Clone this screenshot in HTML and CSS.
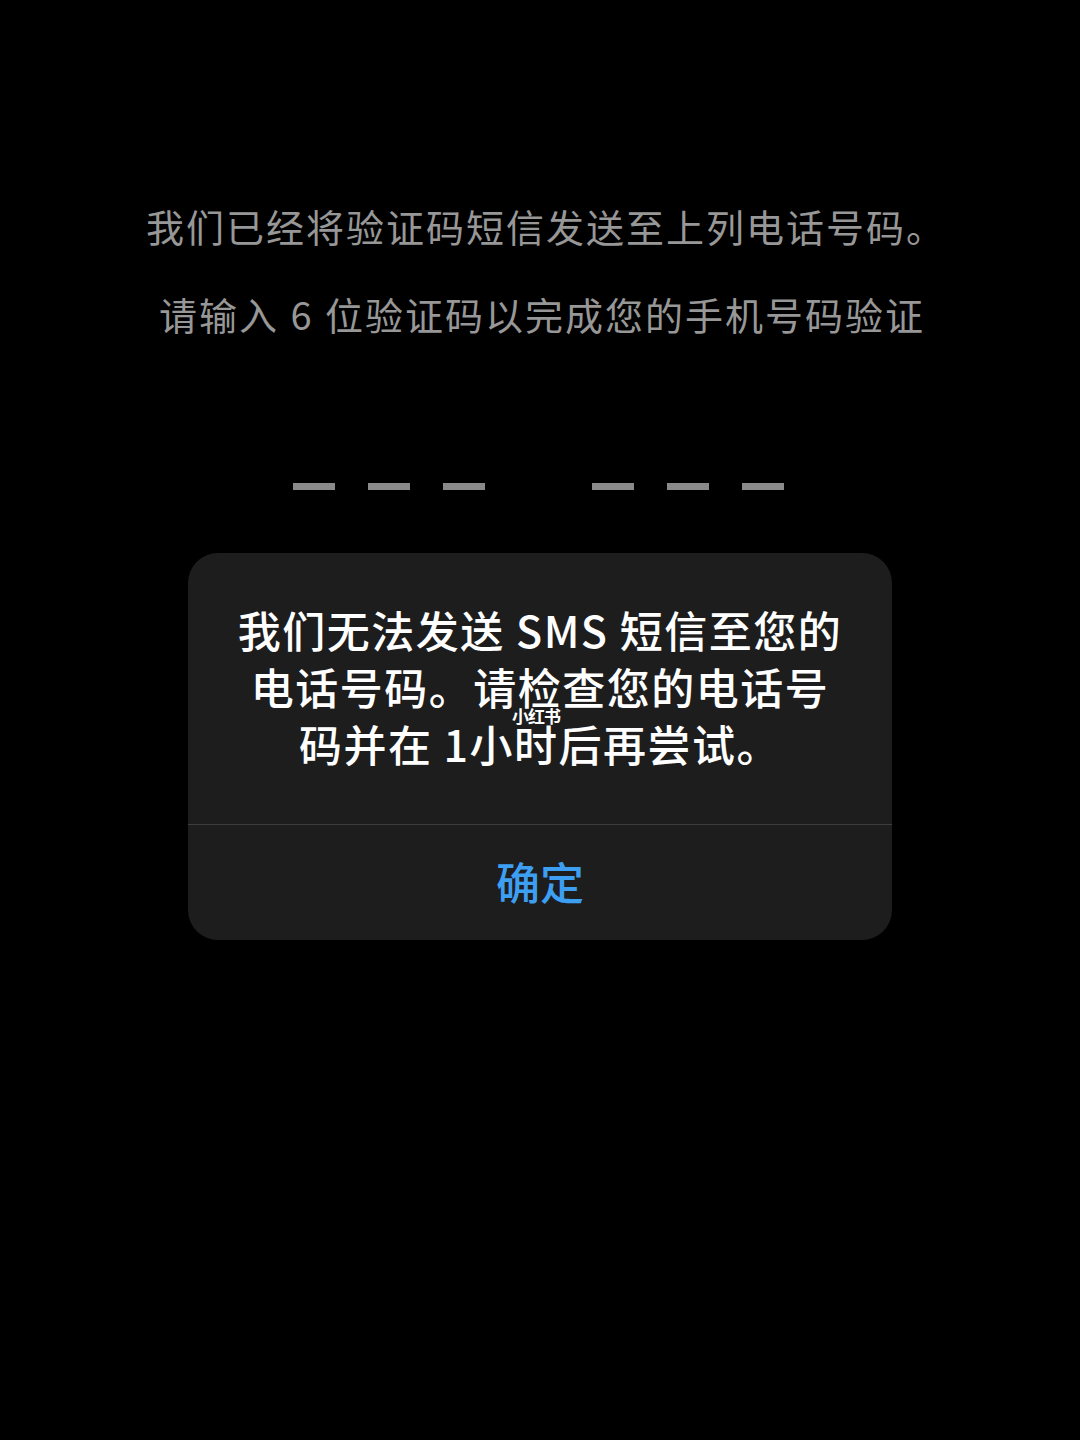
FILE: index.html
```html
<!DOCTYPE html>
<html lang="zh-CN">
<head>
<meta charset="utf-8">
<link rel="stylesheet" href="styles.css">
</head>
<body>
<main class="screen">
  <p class="hint hint-1">我们已经将验证码短信发送至上列电话号码。</p>
  <p class="hint hint-2">请输入 6 位验证码以完成您的手机号码验证</p>
  <div class="code">
    <div class="group"><span class="dash"></span><span class="dash"></span><span class="dash"></span></div>
    <div class="group"><span class="dash"></span><span class="dash"></span><span class="dash"></span></div>
  </div>
  <div class="alert">
    <div class="alert-body">
      <p class="alert-msg">我们无法发送 SMS 短信至您的<br>电话号码。请检查您的电话号<br>码并在 1小时后再尝试。</p>
      <span class="watermark">小红书</span>
    </div>
    <div class="alert-btn">确定</div>
  </div>
</main>
</body>
</html>
```
FILE: styles.css
```css
html, body {
  margin: 0;
  padding: 0;
  background: #000;
}
body {
  width: 1080px;
  height: 1440px;
  font-family: "Noto Sans CJK SC", "Noto Sans", sans-serif;
}
.screen {
  display: flex;
  flex-direction: column;
  align-items: center;
  padding-top: 199px;
}
.hint {
  margin: 0;
  color: #979797;
  font-size: 38px;
  line-height: 54px;
  letter-spacing: 2px;
  text-align: center;
}
.hint-1 {
  padding-left: 12px;
}
.hint-2 {
  margin-top: 34px;
  word-spacing: 1px;
  padding-left: 4px;
}
.code {
  display: flex;
  gap: 107px;
  margin-top: 142px;
  padding-right: 4px;
}
.group {
  display: flex;
  gap: 33px;
}
.dash {
  display: block;
  width: 42px;
  height: 7px;
  background: #8a8a8a;
}
.alert {
  margin-top: 63px;
  width: 704px;
  background: #1d1d1e;
  border-radius: 30px;
  overflow: hidden;
}
.alert-body {
  position: relative;
  padding: 48px 10px 52px;
  border-bottom: 1px solid #3d3d3f;
}
.alert-msg {
  margin: 0;
  color: #fff;
  font-size: 43px;
  font-weight: 500;
  line-height: 57px;
  letter-spacing: 1.5px;
  text-align: center;
}
.watermark {
  position: absolute;
  left: 324px;
  top: 153px;
  color: #fff;
  font-size: 17px;
  font-weight: 700;
  line-height: 20px;
  letter-spacing: -1px;
}
.alert-btn {
  height: 112px;
  padding-bottom: 3px;
  display: flex;
  align-items: center;
  justify-content: center;
  color: #3d9ff2;
  font-size: 44px;
  font-weight: 500;
}
```
